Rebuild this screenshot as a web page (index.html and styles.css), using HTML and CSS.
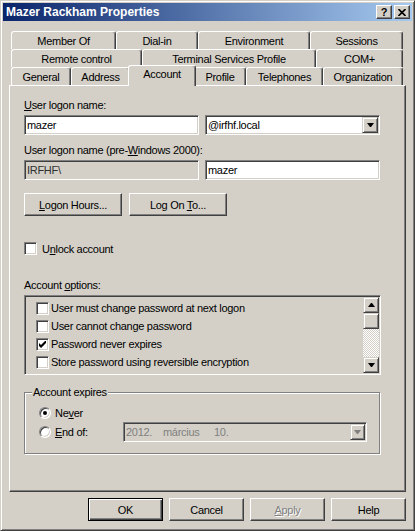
FILE: index.html
```html
<!DOCTYPE html>
<html>
<head>
<meta charset="utf-8">
<link rel="stylesheet" href="styles.css">
</head>
<body>
<div class="window">
  <div class="titlebar">
    <span class="title">Mazer Rackham Properties</span>
    <div class="tb-buttons">
      <span class="tb-btn tb-help">?</span>
      <span class="tb-btn"><svg width="8" height="7" viewBox="0 0 8 7"><path d="M0.5 0 L7.5 7 M7.5 0 L0.5 7" stroke="#000" stroke-width="1.6"/></svg></span>
    </div>
  </div>
  <div class="client">
    <div class="tabs">
      <div class="tab-row">
        <div class="tab t-member">Member Of</div>
        <div class="tab t-dial">Dial-in</div>
        <div class="tab t-env">Environment</div>
        <div class="tab t-sess">Sessions</div>
      </div>
      <div class="tab-row">
        <div class="tab t-remote">Remote control</div>
        <div class="tab t-tsp">Terminal Services Profile</div>
        <div class="tab t-com">COM+</div>
      </div>
      <div class="tab-row">
        <div class="tab t-gen">General</div>
        <div class="tab t-addr">Address</div>
        <div class="tab t-acct active">Account</div>
        <div class="tab t-prof">Profile</div>
        <div class="tab t-tel">Telephones</div>
        <div class="tab t-org">Organization</div>
      </div>
    </div>
    <div class="panel">
      <div class="lbl"><u>U</u>ser logon name:</div>
      <div class="fields">
        <div class="edit">mazer</div>
        <div class="edit combo"><span class="combo-text">@irfhf.local</span><span class="sb-btn"><svg width="7" height="4" viewBox="0 0 7 4"><polygon points="0,0 7,0 4,4 3,4" fill="#000"/></svg></span></div>
      </div>
      <div class="lbl lbl2">User logon name (pre-<u>W</u>indows 2000):</div>
      <div class="fields">
        <div class="edit readonly">IRFHF\</div>
        <div class="edit">mazer</div>
      </div>
      <div class="btns">
        <button class="btn wide"><span><u>L</u>ogon Hours...</span></button>
        <button class="btn wide"><span>Log On <u>T</u>o...</span></button>
      </div>
      <div class="check-row unlock">
        <span class="cb"></span><span>U<u>n</u>lock account</span>
      </div>
      <div class="lbl opts-label">Account <u>o</u>ptions:</div>
      <div class="list">
        <div class="list-items">
          <div class="item"><span class="cb"></span><span>User must change password at next logon</span></div>
          <div class="item"><span class="cb"></span><span>User cannot change password</span></div>
          <div class="item"><span class="cb"><svg width="7" height="7" viewBox="0 0 7 7"><polygon points="0,2 2,4 7,-1 7,2 2,7 0,5" fill="#000"/></svg></span><span>Password never expires</span></div>
          <div class="item"><span class="cb"></span><span>Store password using reversible encryption</span></div>
        </div>
        <div class="scroll">
          <span class="sb-btn"><svg width="7" height="4" viewBox="0 0 7 4"><polygon points="3,0 4,0 7,4 0,4" fill="#000"/></svg></span>
          <span class="sb-btn"></span>
          <span class="sb-track"></span>
          <span class="sb-btn"><svg width="7" height="4" viewBox="0 0 7 4"><polygon points="0,0 7,0 4,4 3,4" fill="#000"/></svg></span>
        </div>
      </div>
      <div class="group">
        <div class="group-title">Account expires</div>
        <div class="radio-row r1">
          <span class="radio checked"></span><span>Ne<u>v</u>er</span>
        </div>
        <div class="radio-row r2">
          <span class="radio"></span><span class="end-label"><u>E</u>nd of:</span>
          <div class="edit date">
            <span class="date-text"><span class="d1">2012.</span><span class="d2">március</span><span>10.</span></span>
            <span class="sb-btn date-btn"><svg width="7" height="4" viewBox="0 0 7 4"><polygon points="0,0 7,0 4,4 3,4" fill="#808080"/></svg></span>
          </div>
        </div>
      </div>
    </div>
    <div class="actions">
      <button class="btn default"><span>OK</span></button>
      <button class="btn"><span>Cancel</span></button>
      <button class="btn disabled"><span><u>A</u>pply</span></button>
      <button class="btn"><span>Help</span></button>
    </div>
  </div>
</div>
</body>
</html>
```
FILE: styles.css
```css
* { box-sizing: border-box; }
body {
  margin: 0;
  background: #d4d0c8;
  font-family: "Liberation Sans", Arial, sans-serif;
  font-size: 11px;
  letter-spacing: -0.3px;
  color: #000;
}
.window {
  width: 415px;
  height: 531px;
  border: 1px solid;
  border-color: #d4d0c8 #404040 #404040 #d4d0c8;
  box-shadow: inset 1px 1px #fff, inset -1px -1px #808080;
  padding: 2px;
  display: flex;
  flex-direction: column;
}
.titlebar {
  height: 18px;
  background: linear-gradient(to right, #0a246a, #a6caf0);
  display: flex;
  align-items: center;
  padding: 0 2px 0 3px;
}
.title {
  flex: 1;
  color: #fff;
  font-weight: bold;
  font-size: 12px;
  letter-spacing: 0;
}
.tb-buttons { display: flex; gap: 2px; }
.tb-btn {
  width: 16px;
  height: 14px;
  background: #d4d0c8;
  border: 1px solid;
  border-color: #fff #404040 #404040 #fff;
  box-shadow: inset -1px -1px #808080;
  display: flex;
  align-items: center;
  justify-content: center;
}
.tb-help { font-weight: bold; font-size: 11px; line-height: 12px; letter-spacing: 0; }
.client {
  flex: 1;
  padding: 10px 6px 0;
  display: flex;
  flex-direction: column;
}
.tabs { margin: 0 3px 0 2px; }
.tab-row { display: flex; height: 18px; align-items: flex-end; }
.tab {
  height: 18px;
  border: 1px solid;
  border-color: #fff #404040 transparent #fff;
  border-bottom: 0;
  border-radius: 3px 3px 0 0;
  box-shadow: inset -1px 0 #808080;
  background: #d4d0c8;
  text-align: center;
  padding-top: 2px;
  line-height: 15px;
  white-space: nowrap;
}
.tab.active {
  height: 21px;
  margin: 0 -2px -1px;
  position: relative;
  z-index: 1;
  padding-top: 1px;
}
.t-member { width: 105px; }
.t-dial { width: 82px; }
.t-env { width: 112px; }
.t-sess { width: 93px; }
.t-remote { width: 131px; }
.t-tsp { width: 174px; }
.t-com { width: 87px; }
.t-gen { width: 60px; }
.t-addr { width: 59px; }
.t-acct { width: 68px; }
.t-prof { width: 52px; }
.t-tel { width: 77px; }
.t-org { width: 80px; }
.panel {
  height: 407px;
  border: 1px solid;
  border-color: #fff #404040 #404040 #fff;
  box-shadow: inset -1px -1px #808080;
  padding: 12px 0 0 14px;
}
.lbl { line-height: 14px; height: 14px; }
.lbl2 { margin-top: 8px; }
.fields { display: flex; gap: 6px; margin-top: 3px; }
.edit {
  width: 175px;
  height: 20px;
  background: #fff;
  border: 1px solid;
  border-color: #808080 #fff #fff #808080;
  box-shadow: inset 1px 1px #404040, inset -1px -1px #d4d0c8;
  padding-left: 2px;
  line-height: 18px;
  white-space: nowrap;
}
.readonly { background: #d4d0c8; color: #303030; }
.combo { display: flex; padding: 1px 1px 1px 2px; line-height: 16px; }
.combo-text { flex: 1; }
.sb-btn {
  width: 16px;
  height: 16px;
  background: #d4d0c8;
  border: 1px solid;
  border-color: #d4d0c8 #404040 #404040 #d4d0c8;
  box-shadow: inset 1px 1px #fff, inset -1px -1px #808080;
  display: flex;
  align-items: center;
  justify-content: center;
  flex: none;
}
.sb-btn svg { display: block; }
.btns { display: flex; gap: 7px; margin-top: 13px; }
.btn {
  width: 75px;
  height: 23px;
  margin: 0;
  padding: 0;
  background: #d4d0c8;
  border: 1px solid;
  border-color: #fff #404040 #404040 #fff;
  box-shadow: inset -1px -1px #808080;
  font: inherit;
  letter-spacing: inherit;
  color: #000;
  display: flex;
  align-items: center;
  justify-content: center;
}
.btn.wide { width: 98px; }
.btn.default {
  border-color: #000;
  box-shadow: inset 1px 1px #fff, inset -1px -1px #404040, inset -2px -2px #808080;
}
.btn.disabled { color: #808080; text-shadow: 1px 1px #fff; }
.check-row { display: flex; align-items: center; gap: 5px; height: 13px; }
.unlock { margin-top: 26px; }
.cb {
  width: 13px;
  height: 13px;
  flex: none;
  background: #fff;
  border: 1px solid;
  border-color: #808080 #fff #fff #808080;
  box-shadow: inset 1px 1px #404040, inset -1px -1px #d4d0c8;
  display: flex;
  align-items: center;
  justify-content: center;
}
.cb svg { display: block; }
.opts-label { margin-top: 23px; }
.list {
  margin-top: 3px;
  width: 357px;
  height: 80px;
  background: #d4d0c8;
  border: 1px solid;
  border-color: #808080 #fff #fff #808080;
  box-shadow: inset 1px 1px #404040, inset -1px -1px #d4d0c8;
  padding: 1px;
  display: flex;
}
.list-items { flex: 1; padding: 2px 0 0 10px; }
.item { height: 18px; display: flex; align-items: center; gap: 2px; white-space: nowrap; }
.scroll { width: 16px; display: flex; flex-direction: column; }
.sb-track {
  flex: 1;
  background: repeating-conic-gradient(#fff 0 25%, #d4d0c8 0 50%) 0 0 / 2px 2px;
}
.group {
  margin-top: 17px;
  width: 356px;
  height: 62px;
  border: 1px solid #808080;
  box-shadow: inset 1px 1px #fff, 1px 1px #fff;
  padding-left: 14px;
}
.group-title {
  margin: -8px 0 0 -7px;
  padding: 0 1px;
  width: fit-content;
  line-height: 14px;
  background: #d4d0c8;
}
.radio-row { display: flex; align-items: center; gap: 4px; }
.r1 { margin-top: 7px; height: 13px; }
.r2 { margin-top: 3px; height: 20px; }
.radio {
  width: 12px;
  height: 12px;
  flex: none;
  border-radius: 50%;
  background: #fff;
  border: 1px solid;
  border-color: #808080 #fff #fff #808080;
  box-shadow: inset 1px 1px #404040, inset -1px -1px #d4d0c8;
  display: flex;
  align-items: center;
  justify-content: center;
}
.radio.checked::after {
  content: "";
  width: 4px;
  height: 4px;
  border-radius: 50%;
  background: #000;
}
.end-label { width: 64px; }
.date {
  width: 244px;
  background: #d4d0c8;
  color: #808080;
  display: flex;
  padding: 1px 1px 1px 2px;
  line-height: 16px;
}
.date-text { flex: 1; }
.d1 { display: inline-block; width: 37px; }
.d2 { display: inline-block; width: 51px; }
.date-btn { width: 15px; }
.actions { display: flex; justify-content: flex-end; gap: 6px; margin-top: 6px; }
```
